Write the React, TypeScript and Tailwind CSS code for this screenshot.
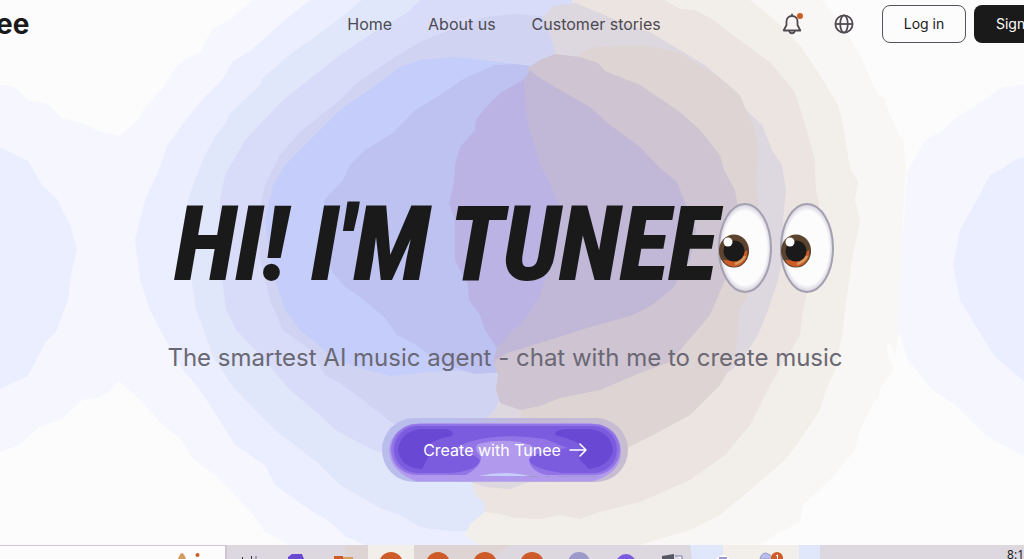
const bands: { fill: string; d: string }[] = [
  { fill: "#f6f6ff", d: "M252 0L235 16L213 29L207 39L200 53L185 59L175 68L163 88L145 107L138 120L120 136L98 131L85 124L62 118L48 104L28 100L15 87L5 85H0V452L20 445L38 428L62 419L82 400L100 397L110 391L119 381L140 400L165 427L180 438L193 459L215 475L252 513L265 532L290 545H600V0Z" },
  { fill: "#ebeeff", d: "M0 147L28 161L42 185L57 199L70 225L77 250L72 270L68 300L57 330L45 343L28 376L0 389Z" },
  { fill: "#ebeeff", d: "M310 0L285 20L250 51L233 61L222 80L200 102L185 121L167 146L158 172L145 200L135 240L140 280L150 310L160 330L183 370L200 390L215 413L235 445L265 465L275 485L310 510L330 522L345 536L365 545H600V0Z" },
  { fill: "#e1e7fa", d: "M362 0L340 18L308 42L290 54L262 79L261 84L240 104L229 115L227 121L215 137L205 155L195 180L188 200L185 230L190 270L196 310L204 330L212 355L233 387L275 430L318 463L340 485L380 508L400 515L420 527L432 529L450 531H600V0Z" },
  { fill: "#d8dcf9", d: "M420 0L407 13L377 30L340 55L283 100L245 140L225 175L220 200L219 235L220 260L226 310L236 330L260 355L290 390L320 415L335 430L373 450L420 465H600V0Z" },
  { fill: "#d0d3f1", d: "M570 18L515 14L485 17L450 30L420 42L395 57L357 83L340 100L300 132L280 155L265 185L258 220L260 260L270 300L283 330L310 350L325 375L340 383L380 413L395 425H570Z" },
  { fill: "#c5cefa", d: "M530 66L490 61L455 57L420 60L400 67L380 82L340 110L310 140L285 165L273 185L265 220L272 270L285 310L300 330L333 357L353 366L390 376L430 372L455 371L495 373Z" },
  { fill: "#bdc2f1", d: "M530 66L515 64L495 65L465 78L440 95L415 110L393 133L365 150L350 165L343 180L324 200L324 250L333 273L345 287L360 297L385 318L397 335L416 345L427 353L450 366L475 374L500 372L560 200Z" },
  { fill: "#f8f7f5", d: "M573 0H822L845 30L860 55L878 95L885 98L888 110L900 137L903 137L906 173L903 220L902 300L899 330L893 372L880 388L879 399L875 400L860 430L855 450L830 480L803 505L800 522L775 535L760 545H480L465 535L470 525L485 512Z" },
  { fill: "#f6f6ff", d: "M1024 84L1000 88L980 103L960 115L940 132L925 140L907 172L902 250L898 330L908 360L930 388L955 405L985 435L1024 457Z" },
  { fill: "#ebeeff", d: "M1024 157L1015 160L1000 170L990 175L978 198L960 230L953 265L960 300L978 330L995 357L1024 381Z" },
  { fill: "#fcfcfc", d: "M890 344Q896 356 902 374L897 372Q886 359 887 346Z" },
  { fill: "#f2efea", d: "M573 0H750L775 20L800 45L820 75L838 105L843 125L850 168L858 182L855 200L860 220L852 260L845 310L842 335L835 370L826 390L820 410L800 440L785 460L750 490L720 515L690 530L640 545H480L465 535L470 525L485 512Z" },
  { fill: "#ece4e1", d: "M573 0H665L680 9L695 10L712 19L730 33L770 62L795 92L805 125L815 160L816 190L819 203L818 240L810 280L803 310L800 335L770 385L750 425L725 455L690 480L640 502L600 512L580 519L560 515L540 519L515 518L500 514L485 512L484 502L475 495L473 484L465 470L500 400Z" },
  { fill: "#ddd7e0", d: "M543 17L553 6L575 3L600 13L620 22L650 32L680 50L705 65L740 95L742 106L762 125L772 150L782 165L786 190L783 220L785 250L778 280L768 310L758 335L745 355L732 370L560 470L510 489L485 487L465 480L470 429L490 415L500 403L555 50L549 32Z" },
  { fill: "#ddd4d3", d: "M580 53L595 47L645 45L680 53L720 78L740 96L755 130L759 150L756 180L758 200L760 250L750 290L740 310L737 340L735 360L720 385L690 415L653 435L627 448L600 470L521 480V405Z" },
  { fill: "#cfc4d1", d: "M528 68L540 60L555 54L580 57L598 63L605 71L640 85L680 112L700 130L720 155L724 170L735 190L740 220L738 240L725 280L710 315L693 335L670 362L640 373L600 390L560 398L540 406L520 410L500 403L496 390L498 375L494 365L497 346L555 200Z" },
  { fill: "#bab3e4", d: "M526 78L500 93L485 108L476 120L475 130L460 147L455 165L454 182L449 203L455 220L455 260L468 285L469 300L480 315L485 330L497 348L507 350L560 325L600 200L560 100Z" },
  { fill: "#c1b8d7", d: "M524 80L530 70L537 76L560 90L590 107L610 125L640 147L660 168L677 182L690 215L696 230L690 260L673 288L652 305L633 315L587 328L543 342L507 353L493 362L497 347L505 340L512 330L520 325L530 312L540 295L545 280L558 240L562 212L548 180L540 165L527 120Z" },
];

function Eye() {
  return (
    <svg width="56" height="92" viewBox="0 0 56 92" aria-hidden="true">
      <defs>
        <radialGradient id="white">
          <stop offset="0.84" stopColor="#fcfcfc" />
          <stop offset="1" stopColor="#d5cede" />
        </radialGradient>
      </defs>
      <ellipse cx="28" cy="46" rx="26" ry="44" fill="url(#white)" stroke="#a3a0af" strokeWidth="2" />
      <ellipse cx="17" cy="49" rx="15" ry="16.5" fill="#5b432d" />
      <path d="M6 58L9 62Q18 68 26 61Q31 56 30 48L27 50Q25 57 19 59Z" fill="#cf5b28" />
      <path d="M18 62Q25 60 28 54" fill="none" stroke="#d49c60" strokeWidth="2.5" />
      <circle cx="17" cy="49" r="10.5" fill="#1a1a1a" />
      <circle cx="11" cy="40" r="4.5" fill="#fcfcfc" />
    </svg>
  );
}

function BellIcon() {
  return (
    <svg width="20" height="22" viewBox="0 0 20 22" fill="none" stroke="currentColor" strokeWidth="1.8" strokeLinecap="round" strokeLinejoin="round" aria-hidden="true">
      <path d="M10 1.500V3M10 3C6.500 3 4.500 5.500 4.500 8.500V12L1.700 17.500H18.300L15.500 12V8.500C15.500 5.500 13.500 3 10 3Z" />
      <path d="M7.300 18C7.500 21 12.500 21 12.700 18" />
    </svg>
  );
}

function GlobeIcon() {
  return (
    <svg width="20" height="20" viewBox="0 0 20 20" fill="none" stroke="currentColor" strokeWidth="1.8" aria-hidden="true">
      <circle cx="10" cy="10" r="8.600" />
      <ellipse cx="10" cy="10" rx="3.800" ry="8.600" />
      <path d="M1.400 10H18.600" />
    </svg>
  );
}

function ButtonGlow() {
  return (
    <svg className="absolute inset-0 h-full w-full" viewBox="0 0 246 64" preserveAspectRatio="none" aria-hidden="true">
      <defs>
        <linearGradient id="halo">
          <stop offset="0" stopColor="#b9bdec" />
          <stop offset="0.3" stopColor="#b9bdec" />
          <stop offset="0.6" stopColor="#c1b8d7" />
          <stop offset="1" stopColor="#c8bdd0" />
        </linearGradient>
      </defs>
      <rect width="246" height="64" rx="32" fill="url(#halo)" />
      <path d="M38 5H208Q237 9 239 32Q240 55 210 63.500H35Q8 54 7 32Q9 9 38 5Z" fill="#b19aed" />
      <rect x="9" y="6" width="229" height="51" rx="25.500" fill="#9274e7" />
      <rect x="12" y="8" width="223" height="47" rx="23.500" fill="#7c5cde" />
      <path d="M54 56Q96 55 98 42Q91 34 72 32Q80 24 104 20Q132 16 163 21Q180 28 186 30Q153 34 147 41Q148 52 190 56Z" fill="#9274e7" />
      <path d="M84 57Q100 48 99 39Q91 30 96 26Q123 19 149 27Q155 31 147 41Q147 52 164 57Z" fill="#b19aed" />
      <path d="M38 11H62Q73 12 70 18Q52 21 43 29Q48 36 46 40L40 51Q19 50 16 32Q18 14 38 11Z" fill="#6948d3" />
      <path d="M208 11H185Q172 12 173 17Q193 22 202 29Q192 35 200 44L207 51Q228 48 231 32Q229 14 208 11Z" fill="#6948d3" />
      <path d="M96 58Q124 52 148 58Z" fill="#c5cefa" />
      <path d="M145 58.500H156M164 58.500H168M176 58.500H215" stroke="#9b9aca" />
    </svg>
  );
}

function Taskbar() {
  return (
    <footer className="relative flex h-3.5 shrink-0 overflow-hidden bg-[#ddd7e0]">
      <div className="w-[227px] border-t border-r-2 border-[#cfc4d1] bg-[#fcfcfc]" />
      <svg className="absolute inset-0 h-3.5 w-full" viewBox="0 0 1024 14" preserveAspectRatio="none" aria-hidden="true">
        <path d="M345 0H368V14H345Z" fill="#ddd4d3" />
        <path d="M368 0H414V14H368Z" fill="#f2efea" />
        <path d="M414 0H510L490 14H414Z" fill="#ddd4d3" />
        <path d="M690 0H820V14H692Z" fill="#e1e7fa" />
        <path d="M723 0H799V14H723Z" fill="#f2efea" />
        <path d="M178 14Q182 2 186 14Z" fill="#d49c60" />
        <circle cx="197.500" cy="10" r="2" fill="#cf5b28" />
        <path d="M242.500 12V14M251.500 11V14" stroke="#333" />
        <path d="M255 11H257V14H255Z" fill="#a3a0af" />
        <path d="M288 14V12L292 9H302L304 14Z" fill="#6948d3" />
        <path d="M334 14V11H343V14Z" fill="#cf5b28" />
        <path d="M343 12H353V14H343Z" fill="#d49c60" />
        <circle cx="391" cy="19" r="12" fill="#cf5b28" />
        <circle cx="438" cy="19" r="12" fill="#cf5b28" />
        <circle cx="485" cy="19" r="12" fill="#cf5b28" />
        <circle cx="532" cy="19" r="12" fill="#cf5b28" />
        <circle cx="579" cy="18" r="11" fill="#9b9aca" />
        <circle cx="626" cy="19" r="10" fill="#7c5cde" />
        <path d="M662 14V11L674 9V14Z" fill="#555764" />
        <path d="M675 11H682V14" fill="#fcfcfc" stroke="#7477ae" />
        <circle cx="723" cy="17" r="7" fill="#fcfcfc" />
        <path d="M719 13H727" stroke="#9b9aca" strokeWidth="2" />
        <path d="M760 14Q761 8 766 8Q771 9 773 14Z" fill="#b9bdec" stroke="#9b9aca" />
        <circle cx="777" cy="13" r="6" fill="#cf5b28" />
        <path d="M776 11L777.500 10V14" fill="none" stroke="#fcfcfc" />
      </svg>
      <time className="relative ml-auto pt-1 font-['Noto_Sans',sans-serif] text-xs leading-3">8:1</time>
    </footer>
  );
}

export default function App() {
  return (
    <div className="relative flex min-h-screen flex-col overflow-hidden bg-[#fcfcfc] font-[Inter,sans-serif] text-[#1a1a1a]">
      <svg className="absolute inset-0 h-full w-full" viewBox="0 0 1024 559" preserveAspectRatio="none" aria-hidden="true">
        {bands.map((band) => (
          <path key={band.d} fill={band.fill} d={band.d} />
        ))}
      </svg>

      <header className="relative grid h-12 grid-cols-[1fr_auto_1fr] items-center">
        <a href="#" className="-ml-1 text-[28px] leading-none font-bold">ee</a>
        <nav className="flex gap-9 pr-4 text-base text-[#4c4a50]">
          <a href="#home">Home</a>
          <a href="#about">About us</a>
          <a href="#stories">Customer stories</a>
        </nav>
        <div className="flex items-center justify-end">
          <button type="button" aria-label="Notifications" className="relative mr-8 text-[#514a50]">
            <BellIcon />
            <span className="absolute top-0 -right-px h-1.5 w-1.5 rounded-full bg-[#cf5b28]" />
          </button>
          <button type="button" aria-label="Language" className="mr-7 text-[#514a50]">
            <GlobeIcon />
          </button>
          <button type="button" className="mr-2 h-[38px] w-[84px] rounded-lg border border-[#555161] bg-[#fcfcfc] text-sm">Log in</button>
          <button type="button" className="h-[38px] w-[50px] rounded-l-lg bg-[#1a1a1a] pl-[22px] text-left text-sm text-white">Sign</button>
        </div>
      </header>

      <main className="relative flex grow flex-col items-center pt-[148px] pr-3.5">
        <h1 className="flex items-center whitespace-nowrap">
          <span className="pb-2 font-['Roboto_Condensed','Open_Sans_Condensed',sans-serif] text-[102px] leading-[96px] font-bold italic [-webkit-text-stroke:2px_#1a1a1a]">HI! I'M TUNEE</span>
          <span className="flex gap-1.5">
            <Eye />
            <Eye />
          </span>
        </h1>
        <p className="mt-10 text-2xl leading-9 text-[#6a6874]">The smartest AI music agent - chat with me to create music</p>
        <button type="button" className="relative mt-[42px] flex h-16 w-[246px] items-center justify-center gap-2 text-base text-white">
          <ButtonGlow />
          <span className="relative">Create with Tunee</span>
          <svg className="relative" width="18" height="14" viewBox="0 0 18 14" fill="none" stroke="currentColor" strokeWidth="1.6" strokeLinecap="round" strokeLinejoin="round" aria-hidden="true">
            <path d="M1 7H17M11 1L17 7L11 13" />
          </svg>
        </button>
      </main>

      <Taskbar />
    </div>
  );
}
